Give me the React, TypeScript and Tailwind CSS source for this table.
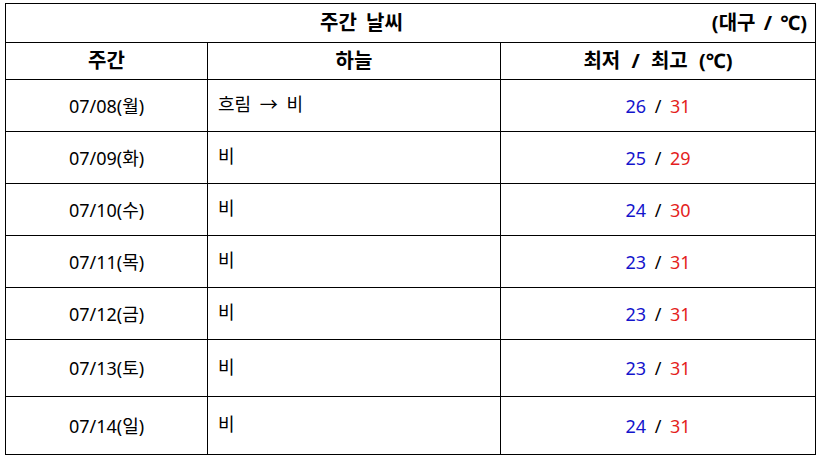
const ROWS = [
  { date: '07/08(월)', sky: '흐림 → 비', lo: 26, hi: 31, h: 'h-[52px]' },
  { date: '07/09(화)', sky: '비', lo: 25, hi: 29, h: 'h-[52px]' },
  { date: '07/10(수)', sky: '비', lo: 24, hi: 30, h: 'h-[52px]' },
  { date: '07/11(목)', sky: '비', lo: 23, hi: 31, h: 'h-[52px]' },
  { date: '07/12(금)', sky: '비', lo: 23, hi: 31, h: 'h-[52px]' },
  { date: '07/13(토)', sky: '비', lo: 23, hi: 31, h: 'h-[57px]' },
  { date: '07/14(일)', sky: '비', lo: 24, hi: 31, h: 'h-[58px]' },
]

export default function App() {
  return (
    <div
      className="h-[460px] w-[822px] bg-white pl-[5px] pt-[3px] text-black"
      style={{ fontFamily: '"Noto Sans", "Noto Sans CJK KR", sans-serif' }}
    >
      <table className="w-[810px] table-fixed border-collapse">
        <colgroup>
          <col className="w-[202px]" />
          <col className="w-[293px]" />
          <col className="w-[315px]" />
        </colgroup>
        <thead>
          <tr className="h-[39px]">
            <th colSpan={3} className="border border-black p-0">
              <div className="flex items-center pl-[314px] pr-[8px] text-[20px] font-bold leading-none">
                <span className="[word-spacing:4px]">주간 날씨</span>
                <span className="ml-auto [word-spacing:3px]">(대구 / ℃)</span>
              </div>
            </th>
          </tr>
          <tr className="h-[37px] text-[20px] font-bold leading-none">
            <th className="border border-black p-0 text-center">주간</th>
            <th className="border border-black p-0 text-center">하늘</th>
            <th className="border border-black p-0 text-center [word-spacing:6px]">
              최저 / 최고 (℃)
            </th>
          </tr>
        </thead>
        <tbody className="text-[18px] leading-none">
          {ROWS.map((r) => (
            <tr key={r.date} className={r.h}>
              <td className="border border-black p-0 text-center">{r.date}</td>
              <td className="border border-black p-0 pb-[3px] pl-[10px] text-left [word-spacing:4px]">
                {r.sky}
              </td>
              <td className="border border-black p-0 text-center [word-spacing:4px]">
                <span className="text-[#1414cc]">{r.lo}</span> /{' '}
                <span className="text-[#e41e1e]">{r.hi}</span>
              </td>
            </tr>
          ))}
        </tbody>
      </table>
    </div>
  )
}
